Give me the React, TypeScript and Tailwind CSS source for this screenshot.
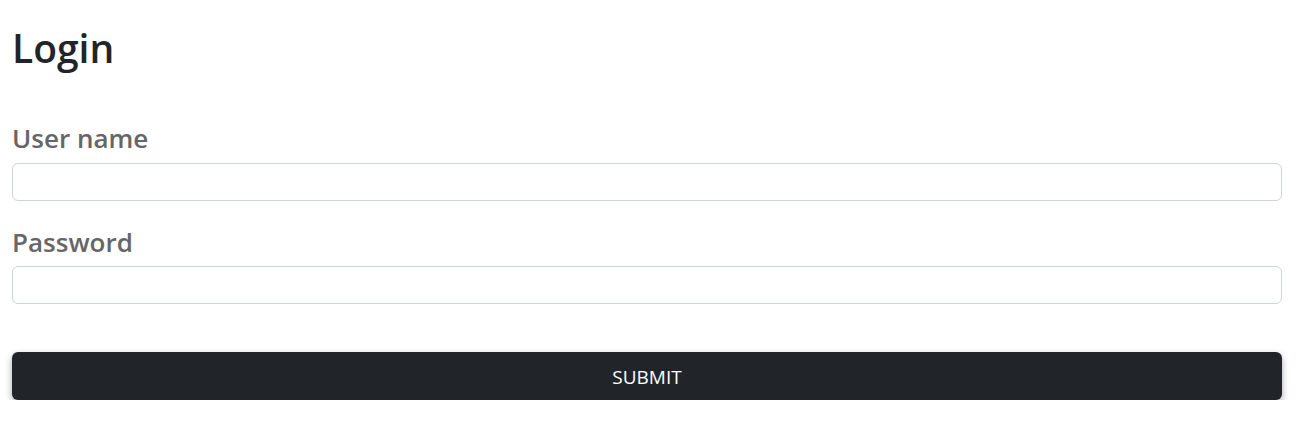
export default function App() {
  return (
    <div className="bg-white pl-3 pr-4 pt-[24px]" style={{ fontFamily: '"Open Sans", "Noto Sans", sans-serif' }}>
      <h1 className="text-[39px] leading-[48px] font-semibold text-[#212529] mb-[48px]">Login</h1>
      <div className="flex flex-col">
        <label className="text-[26px] leading-[36px] text-[#666666] font-semibold">User name</label>
        <input className="h-[38px] w-full rounded-[6px] border border-[#ced4da] px-3 mt-[7px] outline-none" />
        <label className="text-[26px] leading-[36px] text-[#666666] font-semibold mt-[23px]">Password</label>
        <input type="password" className="h-[38px] w-full rounded-[6px] border border-[#ced4da] px-3 mt-[6px] outline-none" />
        <button className="mt-[48px] h-[48px] w-full rounded-[6px] bg-[#212529] pt-[2px] text-white text-[19px] shadow-[0_3px_7px_rgba(0,0,0,0.35)]">SUBMIT</button>
      </div>
    </div>
  );
}
